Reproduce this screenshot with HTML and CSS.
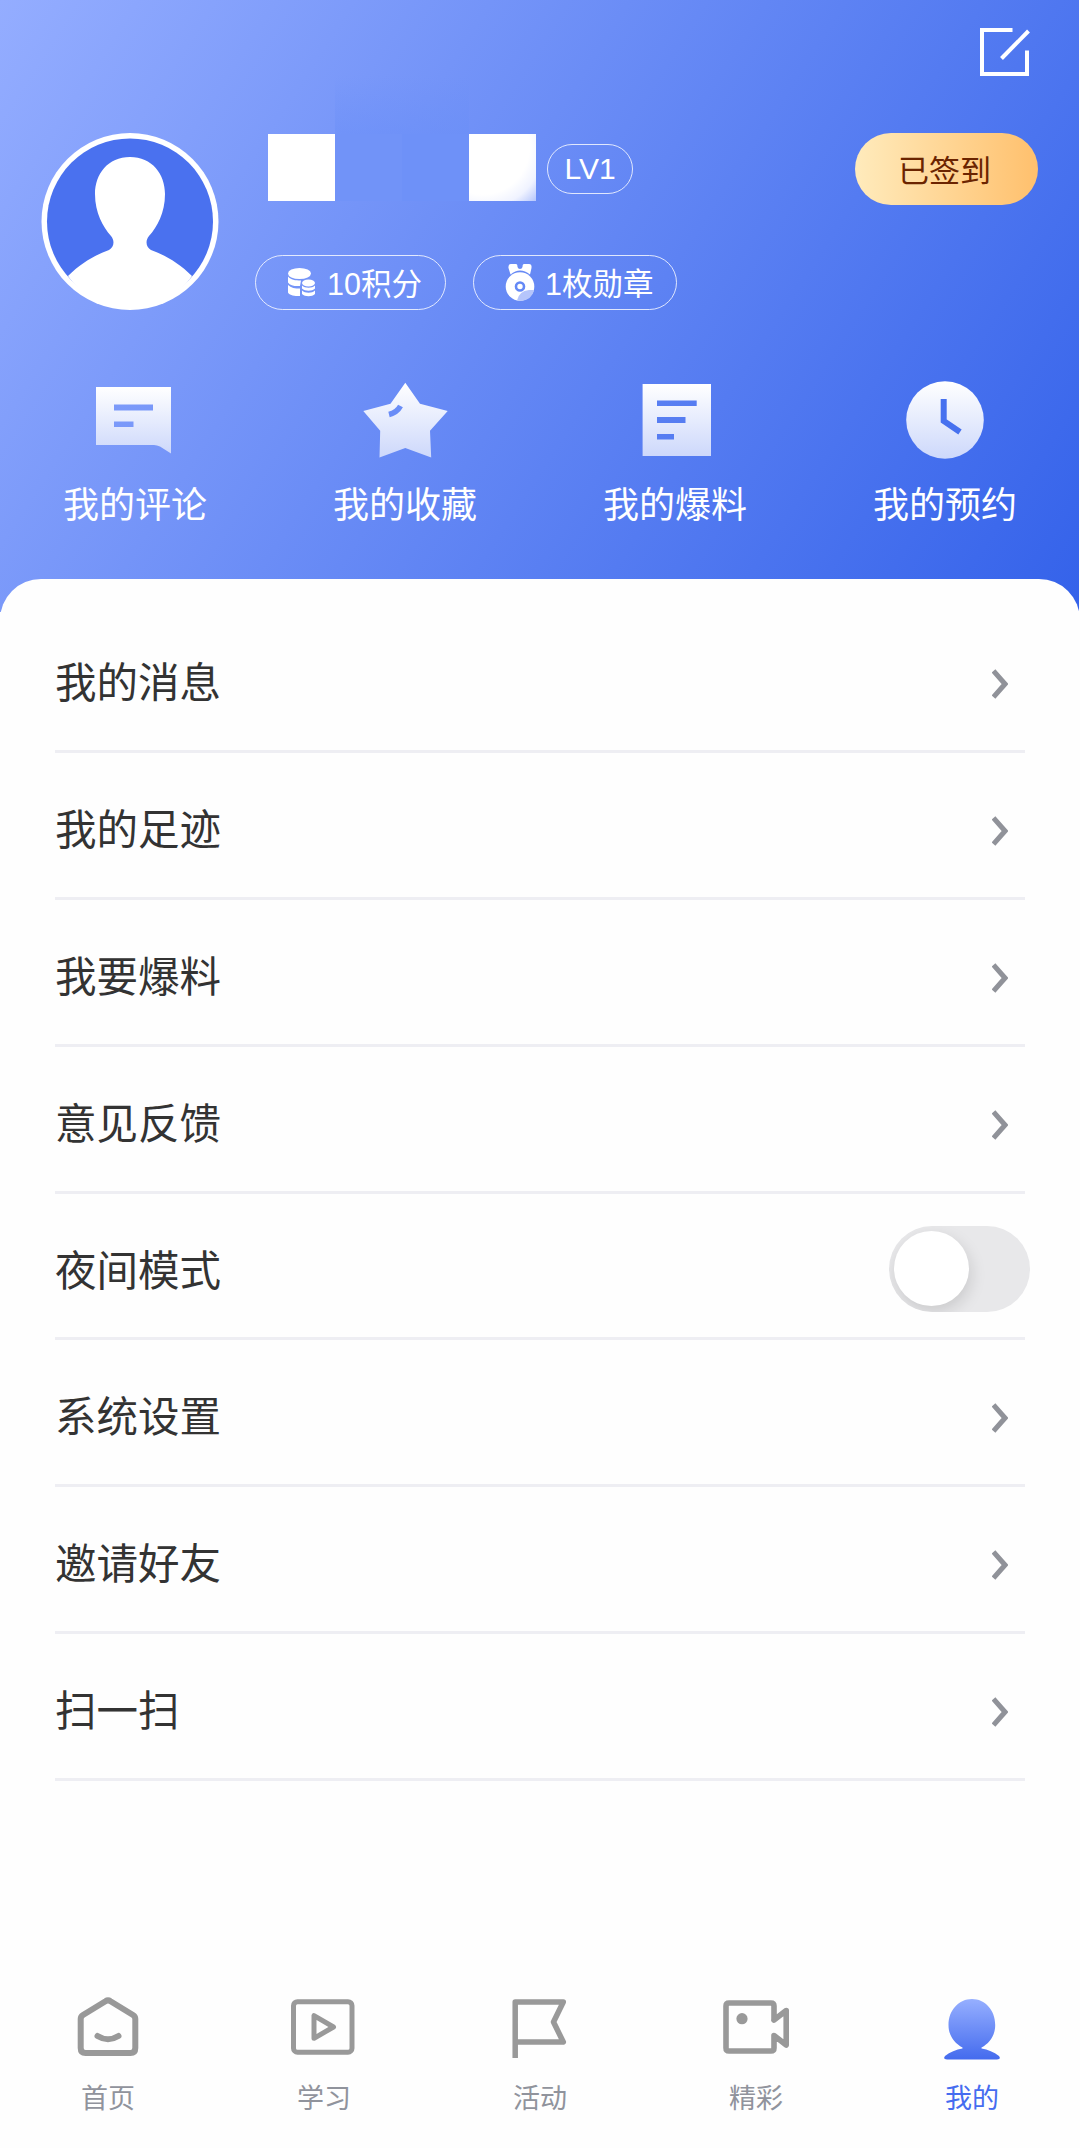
FILE: index.html
```html
<!DOCTYPE html>
<html lang="zh-CN">
<head>
  <meta charset="UTF-8">
  <meta name="viewport" content="width=device-width, initial-scale=1.0">
  <title>我的</title>
  <link rel="stylesheet" href="styles.css">
</head>
<body>
  <div class="header">
    <div class="top-bar">
      <svg class="edit-icon" width="50" height="49" viewBox="0 0 50 49" fill="none" stroke="#fff" stroke-width="4">
        <path d="M32.5 2H2v44h45V22.5"/>
        <path d="M21.5 30.500L48.500 3"/>
      </svg>
    </div>

    <div class="profile">
      <svg class="avatar" width="178" height="178" viewBox="0 0 178 178">
        <circle cx="89" cy="88.500" r="88.500" fill="#fff"/>
        <circle cx="89" cy="88.500" r="83" fill="#4a71ef"/>
        <path fill="#fff" d="M89 24C67 24 54 41 54 61C54 80 62 94 70 103C74 108 73 114 68 117C54 122 40 130 27 143C40 162 64 174 89 174C114 174 138 162 151 143C138 130 124 122 110 117C105 114 104 108 108 103C116 94 124 80 124 61C124 41 111 24 89 24Z"/>
      </svg>
      <div class="info">
        <div class="name-line">
          <div class="name">
            <span class="tile white"></span>
            <span class="tile blue"></span>
            <span class="tile blue dim"></span>
            <span class="tile white fade"></span>
          </div>
          <span class="level">LV1</span>
        </div>
        <div class="badges">
          <div class="badge points">
            <svg width="28" height="29" viewBox="0 0 28 29" fill="#fff">
              <ellipse cx="11.500" cy="5.500" rx="11.500" ry="5.500"/>
              <path d="M0 8.500C3 12 7 12.500 13 12.500L12 18C7 18.500 2 17.500 0 14.500Z"/>
              <path d="M0 17C3 20 7 20.500 12 20.500V28C6 28.500 1 27 0 24.500Z"/>
              <ellipse cx="20.500" cy="15" rx="6.500" ry="3.500"/>
              <path d="M14 17.500C17 20.500 24 20.500 27 17.500V20.500C24 23.500 17 23.500 14 20.500ZM14 22.500C17 25.500 24 25.500 27 22.500V26C24 29 17 29 14 26Z"/>
            </svg>
            <span>10积分</span>
          </div>
          <div class="badge medal">
            <svg width="30" height="37" viewBox="0 0 30 37">
              <path fill="#fff" d="M6 0H11Q12.500 0 12.500 3Q13 5 15 5Q17 5 17.500 3Q17.500 0 19 0H24Q27 0 26.500 4L25 10.500Q15 2.500 5.500 10.500L3.500 4Q3 0 6 0Z"/>
              <circle cx="15" cy="22.500" r="14.300" fill="#fff"/>
              <path fill="#b5c5fb" d="M12 36.500Q14 27 24 26H29Q27 36 16 36.800Z"/>
              <circle cx="15" cy="22.500" r="4" fill="#fff" stroke="#6489f6" stroke-width="2.600"/>
            </svg>
            <span>1枚勋章</span>
          </div>
        </div>
      </div>
      <button class="sign-btn">已签到</button>
    </div>

    <div class="shortcuts">
      <div class="shortcut">
        <svg width="90" height="80" viewBox="0 0 90 80">
          <defs>
            <linearGradient id="fade" x1="0" y1="0" x2="0" y2="1">
              <stop offset="0" stop-color="#fff"/>
              <stop offset="1" stop-color="#cdd8fb"/>
            </linearGradient>
          </defs>
          <path fill="url(#fade)" fill-rule="evenodd" d="M6 7H81V73.500L70 66.500Q67 65 64 65H6ZM24 24.500V30.500H63V24.500ZM24 41.500V47H43.500V41.500Z"/>
        </svg>
        <span>我的评论</span>
      </div>
      <div class="shortcut">
        <svg width="90" height="80" viewBox="0 0 90 80">
          <path fill="url(#fade)" d="M45.300 2.700L60 23.700L87.700 31L70 50.700L71.200 77.500L45.300 68L19.500 77.500L20.200 50.700L3.300 31L30.500 23.700Z"/>
          <path fill="none" stroke="#6a8df7" stroke-width="5.500" d="M29 34.500Q37 32.500 40.500 26"/>
        </svg>
        <span>我的收藏</span>
      </div>
      <div class="shortcut">
        <svg width="90" height="80" viewBox="0 0 90 80">
          <path fill="url(#fade)" fill-rule="evenodd" d="M12.600 4H81V76H12.600ZM27 20.500V26H66.700V20.500ZM27 37V43H55.500V37ZM27 54V59.500H44V54Z"/>
        </svg>
        <span>我的爆料</span>
      </div>
      <div class="shortcut">
        <svg width="90" height="80" viewBox="0 0 90 80">
          <circle cx="45" cy="40" r="38.800" fill="url(#fade)"/>
          <path fill="none" stroke="#4771ef" stroke-width="6" d="M43.700 19V41L60 52"/>
        </svg>
        <span>我的预约</span>
      </div>
    </div>
  </div>

  <div class="menu">
    <div class="menu-item">
      <span>我的消息</span>
      <svg class="arrow" width="16" height="30" viewBox="0 0 16 30"><path d="M1.500 2L13 15L1.500 28"/></svg>
    </div>
    <div class="menu-item">
      <span>我的足迹</span>
      <svg class="arrow" width="16" height="30" viewBox="0 0 16 30"><path d="M1.500 2L13 15L1.500 28"/></svg>
    </div>
    <div class="menu-item">
      <span>我要爆料</span>
      <svg class="arrow" width="16" height="30" viewBox="0 0 16 30"><path d="M1.500 2L13 15L1.500 28"/></svg>
    </div>
    <div class="menu-item">
      <span>意见反馈</span>
      <svg class="arrow" width="16" height="30" viewBox="0 0 16 30"><path d="M1.500 2L13 15L1.500 28"/></svg>
    </div>
    <div class="menu-item">
      <span>夜间模式</span>
      <div class="switch"><div class="knob"></div></div>
    </div>
    <div class="menu-item">
      <span>系统设置</span>
      <svg class="arrow" width="16" height="30" viewBox="0 0 16 30"><path d="M1.500 2L13 15L1.500 28"/></svg>
    </div>
    <div class="menu-item">
      <span>邀请好友</span>
      <svg class="arrow" width="16" height="30" viewBox="0 0 16 30"><path d="M1.500 2L13 15L1.500 28"/></svg>
    </div>
    <div class="menu-item">
      <span>扫一扫</span>
      <svg class="arrow" width="16" height="30" viewBox="0 0 16 30"><path d="M1.500 2L13 15L1.500 28"/></svg>
    </div>
  </div>

  <div class="tab-bar">
    <div class="tab">
      <svg class="tab-icon" width="72" height="64" viewBox="0 0 72 64" stroke-width="6">
        <path d="M33.500 4.200Q36 2.500 38.500 4.200L61 18Q63.300 19.500 63.300 22V51Q63.300 56 58.500 56H13.500Q8.700 56 8.700 51V22Q8.700 19.500 11 18Z"/>
        <path d="M25.500 39Q36 45.500 46.500 39"/>
      </svg>
      <span>首页</span>
    </div>
    <div class="tab">
      <svg class="tab-icon" width="72" height="64" viewBox="0 0 72 64" stroke-width="5">
        <rect x="5.500" y="4.700" width="58.500" height="50.500" rx="4"/>
        <path d="M26 18.700V41.300L45.500 30Z"/>
      </svg>
      <span>学习</span>
    </div>
    <div class="tab">
      <svg class="tab-icon flag" width="72" height="64" viewBox="0 0 72 64" stroke-width="5.500">
        <path d="M11.200 61V5H59.300L49.500 25L59.300 45H11.200"/>
      </svg>
      <span>活动</span>
    </div>
    <div class="tab">
      <svg class="tab-icon" width="72" height="64" viewBox="0 0 72 64" stroke-width="5.600">
        <path d="M54 23V9Q54 6 51 6H9Q6 6 6 9V51Q6 54 9 54H51Q54 54 54 51V38.500L66.200 48V13.500L54 23"/>
        <path class="gap" d="M54 26V35.500"/>
        <circle cx="22" cy="21.700" r="5.600" fill="#999" stroke="none"/>
      </svg>
      <span>精彩</span>
    </div>
    <div class="tab active">
      <svg width="72" height="64" viewBox="0 0 72 64">
        <defs>
          <linearGradient id="me" x1="0" y1="0" x2="0" y2="1">
            <stop offset="0" stop-color="#96afff"/>
            <stop offset="1" stop-color="#446bee"/>
          </linearGradient>
        </defs>
        <path fill="url(#me)" d="M36 2C49 2 59.200 13 59.200 28C59.200 38 54 46 45.500 50.500V51.500C52 52.500 58 55 63 59Q65.500 62.500 61 62.500H11Q6.500 62.500 9 59C14 55 20 52.500 26.500 51.500V50.500C18 46 12.500 38 12.500 28C12.500 13 23 2 36 2Z"/>
      </svg>
      <span>我的</span>
    </div>
  </div>
</body>
</html>
```
FILE: styles.css
```css
* {
  box-sizing: border-box;
}
body {
  margin: 0;
  background-color: #fefefe;
  font-family: "Liberation Sans", "Noto Sans CJK SC", sans-serif;
  height: 2148px;
  display: flex;
  flex-direction: column;
}
svg {
  display: block;
  flex-shrink: 0;
}

/* header */
.header {
  height: 612px;
  width: 1079px;
  background: linear-gradient(123deg, #94adff, #3462ea);
  color: #fff;
}
.top-bar {
  display: flex;
  justify-content: flex-end;
  height: 133px;
  padding: 28px 49px 0 0;
}
.profile {
  display: flex;
  align-items: flex-start;
  padding: 0 41px 0 41px;
  height: 178px;
}
.info {
  flex: 1;
  padding: 1px 0 0 36px;
}
.name-line {
  display: flex;
  height: 67px;
  padding-left: 13px;
}
.name {
  display: flex;
}
.tile {
  width: 67px;
  height: 67px;
}
.blue {
  position: relative;
  background-color: #7193f8;
}
.blue::before {
  content: "";
  position: absolute;
  left: 0;
  bottom: 67px;
  width: 67px;
  height: 58px;
  background: linear-gradient(rgba(106, 143, 248, 0), rgba(106, 143, 248, 0.5));
}
.dim {
  background-color: #6e91f8;
}
.white {
  background-color: #fff;
}
.fade {
  background: radial-gradient(circle at 20% 20%, #fff 62%, #f0f3ff 80%, #b4c5fc 100%);
}
.level {
  margin: 10px 0 0 11px;
  width: 86px;
  height: 50px;
  line-height: 48px;
  border: 1.5px solid rgba(255, 255, 255, 0.8);
  border-radius: 25px;
  font-size: 30px;
  text-align: center;
}
.badges {
  display: flex;
  gap: 27px;
  margin-top: 54px;
}
.badge {
  display: flex;
  align-items: center;
  height: 55px;
  border: 1.5px solid rgba(255, 255, 255, 0.8);
  border-radius: 28px;
  font-size: 30.5px;
  line-height: 52px;
  white-space: nowrap;
}
.badge span {
  padding-top: 2px;
}
.points {
  width: 191px;
  padding-left: 32px;
  gap: 11px;
}
.medal {
  width: 204px;
  padding-left: 31px;
  gap: 10px;
}
.sign-btn {
  width: 183px;
  height: 72px;
  padding: 0 4px 2px 0;
  border: none;
  border-radius: 36px;
  background: linear-gradient(90deg, #ffebbc, #ffc06d);
  color: #6b2400;
  font-family: inherit;
  font-size: 31px;
}
.shortcuts {
  display: flex;
  width: 1080px;
  padding-top: 69px;
}
.shortcut {
  flex: 1;
  display: flex;
  flex-direction: column;
  align-items: center;
  font-size: 36px;
  line-height: 52px;
}
.shortcut span {
  margin-top: 20px;
}

/* menu list */
.menu {
  margin-top: -33px;
  padding: 27px 55px 0;
  background-color: #fefefe;
  border-radius: 41px 41px 0 0;
}
.menu-item {
  display: flex;
  align-items: center;
  justify-content: space-between;
  height: 146.9px;
  padding-top: 12px;
  border-bottom: 3px solid #eeeef3;
  color: #333;
  font-size: 41.5px;
}
.menu-item span {
  padding-bottom: 8px;
}
.arrow {
  margin-right: 17px;
  fill: none;
  stroke: #909299;
  stroke-width: 5px;
}
.switch {
  width: 141px;
  height: 86px;
  margin: 0 -5px 5px 0;
  padding: 5px;
  border-radius: 43px;
  background-color: #e8e8ea;
  overflow: hidden;
}
.knob {
  width: 75px;
  height: 75px;
  border-radius: 50%;
  background-color: #fff;
  box-shadow: 2px 6px 16px rgba(0, 0, 0, 0.13);
}

/* bottom tabs */
.tab-bar {
  display: flex;
  margin-top: auto;
  height: 151px;
}
.tab {
  flex: 1;
  display: flex;
  flex-direction: column;
  align-items: center;
  color: #90939c;
  font-size: 27px;
  line-height: 40px;
}
.tab span {
  margin-top: 18px;
}
.tab-icon {
  fill: none;
  stroke: #999;
  stroke-linecap: round;
  stroke-linejoin: round;
}
.flag {
  stroke-linecap: butt;
}
.gap {
  stroke: none;
}
.active {
  color: #456cf0;
}
```
